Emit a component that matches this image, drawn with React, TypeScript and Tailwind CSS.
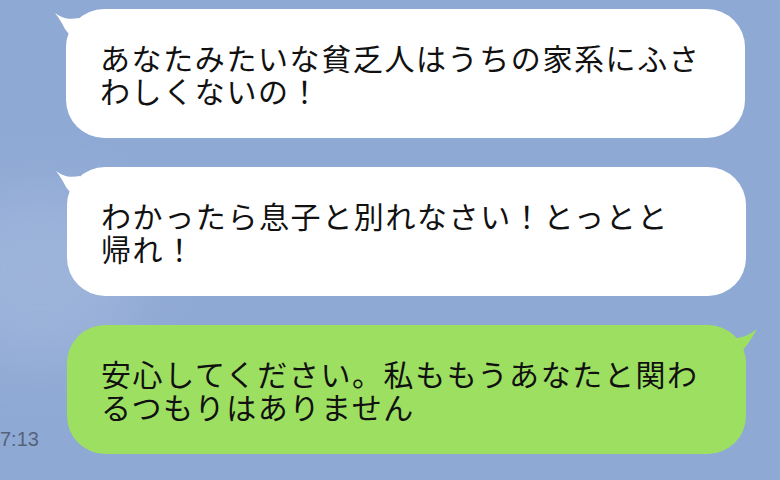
const JP = "font-['Noto_Sans_CJK_JP','Noto_Sans',sans-serif]";

function TailLeft() {
  return (
    <svg className="absolute -left-[13px] top-[3px]" width="34" height="34" viewBox="0 0 34 34">
      <path d="M2 1 C9 6 15 8 26 6 L30 30 C22 27 15 22 12 17 C9 11 6 6 2 1 Z" fill="#ffffff" />
    </svg>
  );
}

function TailRight() {
  return (
    <svg className="absolute -right-[14px] top-[3px]" width="36" height="36" viewBox="0 0 36 36">
      <path d="M33 1 C29 8 25 15 19 22 C17 25 14 28 8 31 L2 10 C14 12 24 8 33 1 Z" fill="#9de061" />
    </svg>
  );
}

function Bubble({ first, second, mine = false }: { first: string; second: string; mine?: boolean }) {
  return (
    <div
      className={`relative w-[679px] h-[129px] rounded-[38px] flex flex-col justify-center pl-[34px] ${
        mine ? 'bg-[#9de061]' : 'bg-white'
      }`}
    >
      {mine ? <TailRight /> : <TailLeft />}
      <p className={`${JP} text-[30px] leading-[33px] tracking-[1.6px] text-[#111] whitespace-nowrap`}>
        {first}
        <br />
        {second}
      </p>
    </div>
  );
}

export default function App() {
  return (
    <div className="relative w-[780px] h-[480px] overflow-hidden bg-[#8fa9d5]">
      <div className="absolute -left-[60px] top-[190px] w-[200px] h-[170px] rounded-full bg-[#a3b8dc] blur-[30px] opacity-70" />
      <div className="relative flex flex-col gap-[29px] pt-[9px]">
        <div className="flex pl-[66px]">
          <Bubble first="あなたみたいな貧乏人はうちの家系にふさ" second="わしくないの！" />
        </div>
        <div className="flex pl-[67px]">
          <Bubble first="わかったら息子と別れなさい！とっとと" second="帰れ！" />
        </div>
        <div className="flex items-end">
          <div className="w-[67px] pb-[4px]">
            <span className="block font-['Liberation_Sans',sans-serif] text-[20px] leading-[22px] text-[#56627a]">
              7:13
            </span>
          </div>
          <Bubble mine first="安心してください。私ももうあなたと関わ" second="るつもりはありません" />
        </div>
      </div>
    </div>
  );
}
